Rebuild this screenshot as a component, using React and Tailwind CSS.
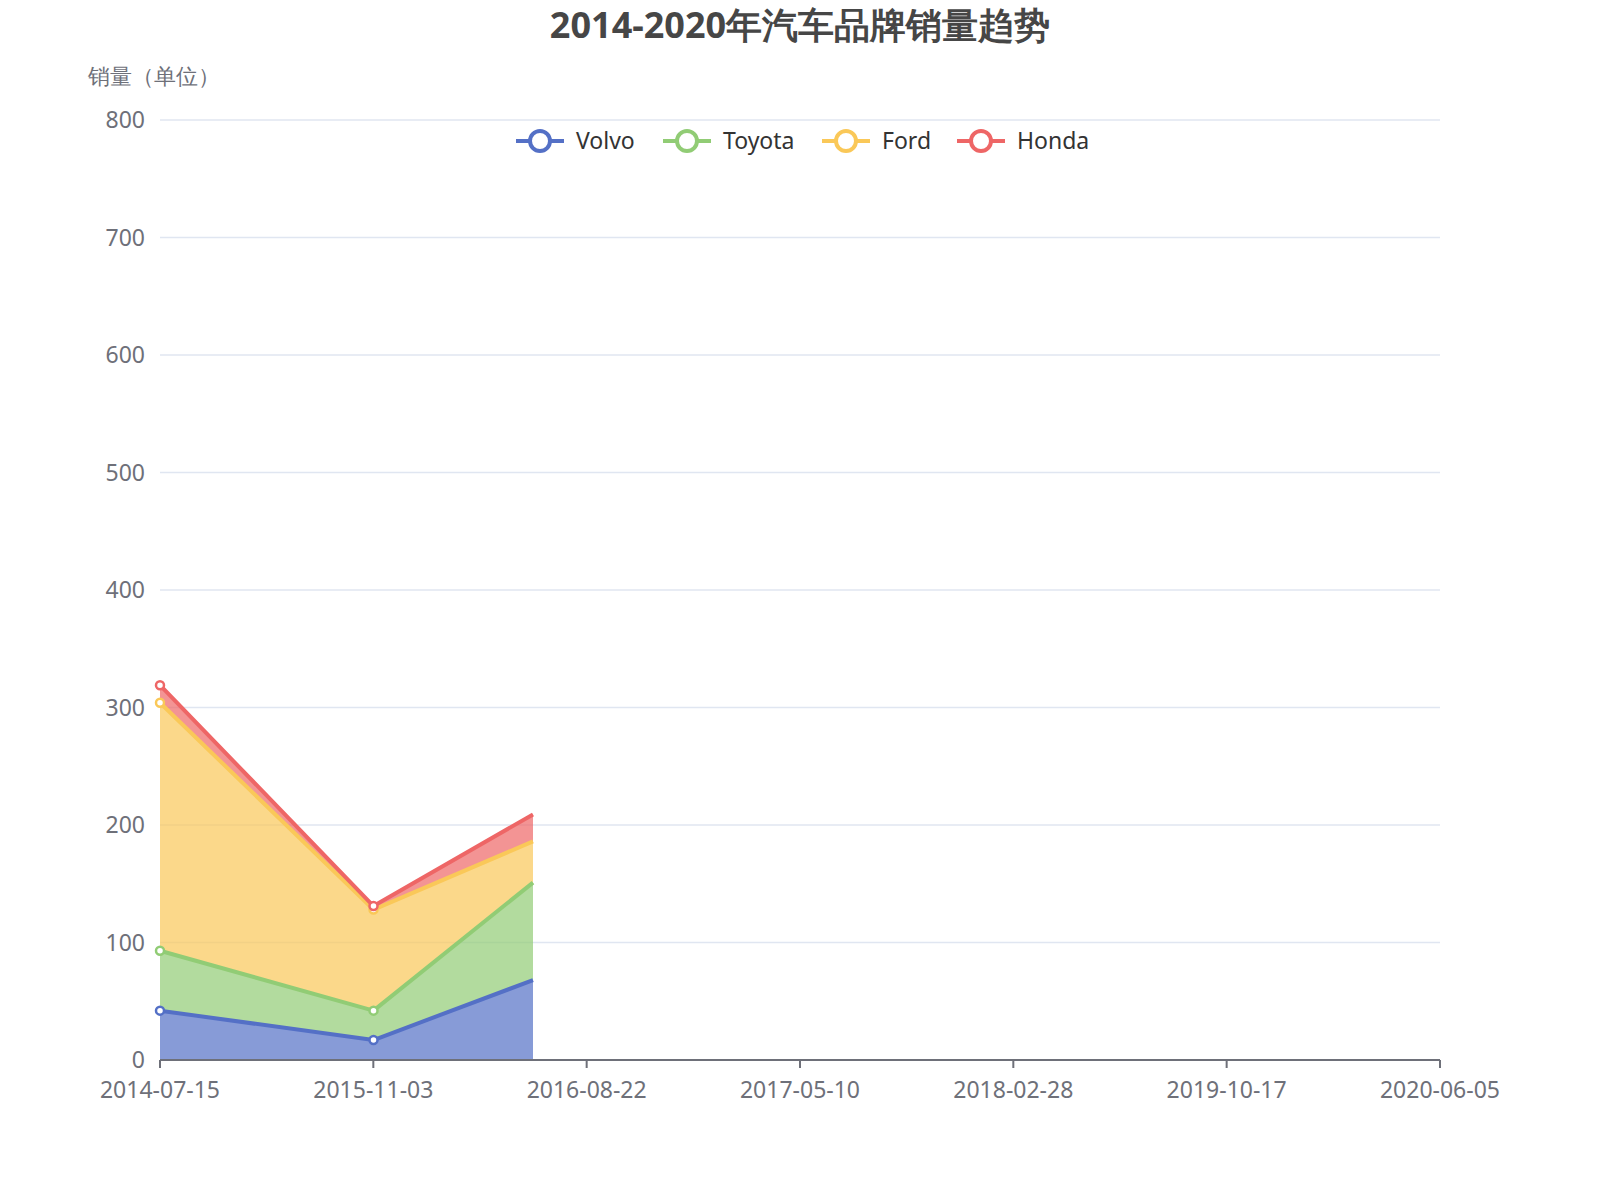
import React from "react";

const Y = (v) => 1060 - v * 1.175;
const XS = [160, 373.5, 533];

const series = [
  { name: "Volvo", color: "#5470c6", vals: [42, 17, 68], base: [0, 0, 0], lx: 540 },
  { name: "Toyota", color: "#91cc75", vals: [93, 42, 151], base: [42, 17, 68], lx: 687 },
  { name: "Ford", color: "#fac858", vals: [304, 128, 186], base: [93, 42, 151], lx: 846 },
  { name: "Honda", color: "#ee6666", vals: [319, 131, 209], base: [304, 128, 186], lx: 981 },
];

const xLabels = ["2014-07-15", "2015-11-03", "2016-08-22", "2017-05-10", "2018-02-28", "2019-10-17", "2020-06-05"];

export default function App() {
  return (
    <div className="w-[1600px] h-[1200px] bg-white font-['Noto_Sans','Noto_Sans_CJK_SC',sans-serif]">
      <svg width="1600" height="1200">
        <text x="800" y="38" textAnchor="middle" fontSize="36" fontWeight="bold" fill="#464646">
          2014-2020年汽车品牌销量趋势
        </text>
        <text x="88" y="84" fontSize="22" fill="#6e7079">销量（单位）</text>

        {[0, 100, 200, 300, 400, 500, 600, 700, 800].map((v) => (
          <g key={v}>
            {v > 0 && <line x1="160" x2="1440" y1={Y(v)} y2={Y(v)} stroke="#e0e6f1" strokeWidth="1.5" />}
            <text x="145" y={Y(v) + 8} textAnchor="end" fontSize="23" fill="#6e7079">{v}</text>
          </g>
        ))}

        {series.map((s) => {
          const top = s.vals.map((v, i) => `${XS[i]},${Y(v)}`);
          const bot = s.base.map((v, i) => `${XS[i]},${Y(v)}`).reverse();
          return (
            <polygon key={s.name + "a"} points={[...top, ...bot].join(" ")} fill={s.color} fillOpacity="0.7" />
          );
        })}
        {series.map((s) => (
          <g key={s.name + "l"}>
            <polyline
              points={s.vals.map((v, i) => `${XS[i]},${Y(v)}`).join(" ")}
              fill="none"
              stroke={s.color}
              strokeWidth="4"
              strokeLinejoin="round"
            />
            {s.vals.slice(0, 2).map((v, i) => (
              <circle key={i} cx={XS[i]} cy={Y(v)} r="4" fill="#fff" stroke={s.color} strokeWidth="2.5" />
            ))}
          </g>
        ))}

        <line x1="160" x2="1440" y1="1060" y2="1060" stroke="#6e7079" strokeWidth="2" />
        {xLabels.map((l, i) => {
          const x = 160 + i * 213.33;
          return (
            <g key={l}>
              <line x1={x} x2={x} y1="1060" y2="1068" stroke="#6e7079" strokeWidth="2" />
              <text x={x} y="1098" textAnchor="middle" fontSize="23" fill="#6e7079">{l}</text>
            </g>
          );
        })}

        {series.map((s) => (
          <g key={s.name + "g"}>
            <line x1={s.lx - 24} x2={s.lx + 24} y1="141" y2="141" stroke={s.color} strokeWidth="4" />
            <circle cx={s.lx} cy="141" r="10" fill="#fff" stroke={s.color} strokeWidth="4" />
            <text x={s.lx + 36} y="149" fontSize="23" fill="#333">{s.name}</text>
          </g>
        ))}
      </svg>
    </div>
  );
}
